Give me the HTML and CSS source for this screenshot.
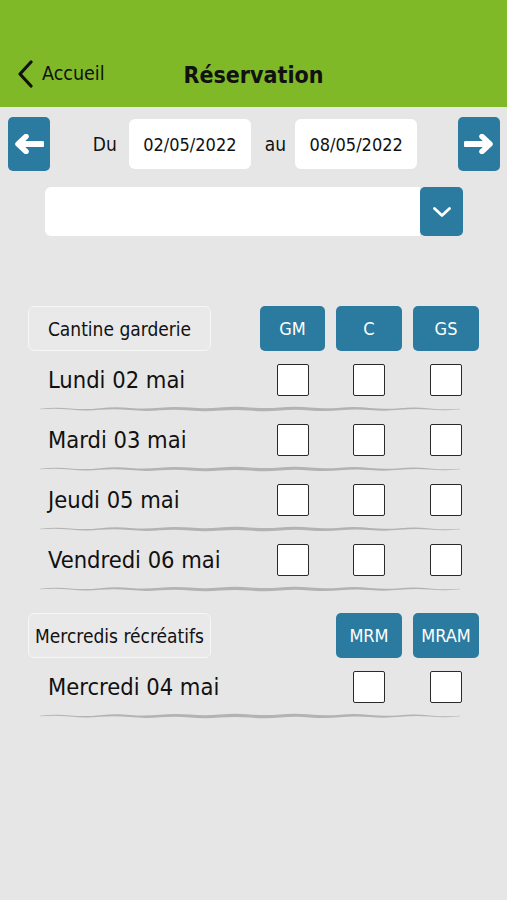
FILE: index.html
```html
<!DOCTYPE html>
<html lang="fr">
<head>
  <meta charset="UTF-8">
  <meta name="viewport" content="width=device-width, initial-scale=1.0">
  <title>Réservation</title>
  <link rel="stylesheet" href="styles.css">
</head>
<body>
  <!-- shared brush-stroke separator -->
  <svg class="defs" width="0" height="0">
    <symbol id="wave" viewBox="0 0 420 8">
      <path d="M0,3.7 Q15,2.15 30,3.41 Q45,4.67 60,3.14 Q75,1.61 90,2.89 Q105,4.18 120,2.68 Q135,1.2 150,2.53 Q165,3.87 180,2.43 Q195,1.01 210,2.4 Q225,3.81 240,2.43 Q255,1.07 270,2.53 Q285,4.0 300,2.68 Q315,1.38 330,2.89 Q345,4.41 360,3.14 Q375,1.87 390,3.41 Q405,4.95 420,3.7
               L420,4.3 Q405,5.85 390,4.59 Q375,3.33 360,4.86 Q345,6.39 330,5.11 Q315,3.82 300,5.32 Q285,6.8 270,5.47 Q255,4.13 240,5.57 Q225,6.99 210,5.6 Q195,4.19 180,5.57 Q165,6.93 150,5.47 Q135,4.0 120,5.32 Q105,6.62 90,5.11 Q75,3.59 60,4.86 Q45,6.13 30,4.59 Q15,3.05 0,4.3 Z"/>
    </symbol>
  </svg>

  <header class="topbar">
    <a class="back" href="#">
      <svg class="back-icon" viewBox="0 0 16 28" width="16" height="28">
        <path d="M14 2 L3 14 L14 26" fill="none" stroke="#111" stroke-width="3.2" stroke-linecap="round" stroke-linejoin="round"/>
      </svg>
      Accueil
    </a>
    <h1 class="title">Réservation</h1>
    <span></span>
  </header>

  <div class="period">
    <button class="nav-btn">
      <svg viewBox="0 0 30 20" width="30" height="20">
        <path d="M28 10 H6" stroke="#fff" stroke-width="6" stroke-linecap="round"/>
        <path d="M12 2.5 L4 10 L12 17.5" fill="none" stroke="#fff" stroke-width="5.5" stroke-linecap="round" stroke-linejoin="round"/>
      </svg>
    </button>
    <div class="dates">
      <span class="dates-word">Du</span>
      <div class="date-box">02/05/2022</div>
      <span class="dates-word">au</span>
      <div class="date-box">08/05/2022</div>
    </div>
    <button class="nav-btn">
      <svg viewBox="0 0 30 20" width="30" height="20">
        <path d="M2 10 H24" stroke="#fff" stroke-width="6" stroke-linecap="round"/>
        <path d="M18 2.5 L26 10 L18 17.5" fill="none" stroke="#fff" stroke-width="5.5" stroke-linecap="round" stroke-linejoin="round"/>
      </svg>
    </button>
  </div>

  <div class="picker">
    <div class="picker-field"></div>
    <button class="picker-btn">
      <svg viewBox="0 0 18 10" width="18" height="10">
        <path d="M1.5 1.5 L9 8.5 L16.5 1.5" fill="none" stroke="#fff" stroke-width="2.8" stroke-linecap="round" stroke-linejoin="round"/>
      </svg>
    </button>
  </div>

  <section class="group">
    <div class="group-head">
      <div class="group-label">Cantine garderie</div>
      <div class="tag">GM</div>
      <div class="tag">C</div>
      <div class="tag">GS</div>
    </div>

    <div class="day">
      <span class="day-name">Lundi 02 mai</span>
      <span class="check"></span><span class="check"></span><span class="check"></span>
    </div>
    <div class="wave"><svg><use href="#wave"/></svg></div>

    <div class="day">
      <span class="day-name">Mardi 03 mai</span>
      <span class="check"></span><span class="check"></span><span class="check"></span>
    </div>
    <div class="wave"><svg><use href="#wave"/></svg></div>

    <div class="day">
      <span class="day-name">Jeudi 05 mai</span>
      <span class="check"></span><span class="check"></span><span class="check"></span>
    </div>
    <div class="wave"><svg><use href="#wave"/></svg></div>

    <div class="day">
      <span class="day-name">Vendredi 06 mai</span>
      <span class="check"></span><span class="check"></span><span class="check"></span>
    </div>
    <div class="wave"><svg><use href="#wave"/></svg></div>
  </section>

  <section class="group group-second">
    <div class="group-head">
      <div class="group-label">Mercredis récréatifs</div>
      <div class="tag col-2">MRM</div>
      <div class="tag col-3">MRAM</div>
    </div>

    <div class="day">
      <span class="day-name">Mercredi 04 mai</span>
      <span class="check col-2"></span><span class="check col-3"></span>
    </div>
    <div class="wave"><svg><use href="#wave"/></svg></div>
  </section>
</body>
</html>
```

FILE: styles.css
```css
body {
  margin: 0;
  min-height: 900px;
  background-color: #e6e6e6;
  font-family: "DejaVu Sans Condensed", "DejaVu Sans", sans-serif;
  color: #111;
}

.defs {
  position: absolute;
  width: 0;
  height: 0;
}

/* Top bar */
.topbar {
  height: 67px;
  padding-top: 40px;
  background-color: #7fb927;
  display: grid;
  grid-template-columns: 1fr auto 1fr;
  align-items: center;
}

.back {
  display: flex;
  align-items: center;
  gap: 9px;
  padding-left: 17px;
  color: #111;
  text-decoration: none;
  font-size: 19.5px;
}

.back-icon {
  display: block;
}

.title {
  margin: 0;
  font-size: 23px;
  font-weight: bold;
  padding-top: 3px;
}

/* Period selector */
.period {
  display: flex;
  align-items: center;
  margin: 10px 7px 0 8px;
}

.nav-btn {
  width: 42px;
  height: 54px;
  border: none;
  border-radius: 5px;
  background-color: #2b7aa0;
  padding: 0;
  display: flex;
  align-items: center;
  justify-content: center;
}

.dates {
  flex: 1;
  display: flex;
  align-items: center;
  justify-content: center;
  padding-left: 2px;
}

.dates-word {
  font-size: 19px;
}

.dates-word:first-child {
  margin-right: 12px;
}

.date-box {
  width: 122px;
  height: 50px;
  background-color: #fff;
  border-radius: 6px;
  display: flex;
  align-items: center;
  justify-content: center;
  font-size: 18px;
}

.date-box + .dates-word {
  margin: 0 9px 0 14px;
}

.picker {
  display: flex;
  margin: 16px 44px 0 45px;
  height: 49px;
}

.picker-field {
  flex: 1;
  background-color: #fff;
  border-radius: 6px 0 0 6px;
}

.picker-btn {
  width: 43px;
  border: none;
  border-radius: 5px;
  background-color: #2b7aa0;
  padding: 0;
  display: flex;
  align-items: center;
  justify-content: center;
}

/* Groups */
.group {
  margin: 70px 28px 0 28px;
}

.group-second {
  margin-top: 10px;
}

.group-head,
.day {
  display: grid;
  grid-template-columns: 1fr 65px 66px 66px;
  column-gap: 11px;
}

.group-head {
  height: 45px;
}

.group-label {
  width: 181px;
  border: 1px solid #f6f6f6;
  border-radius: 6px;
  background-color: #e9e9e9;
  display: flex;
  align-items: center;
  justify-content: center;
  font-size: 19px;
  white-space: nowrap;
}

.tag {
  background-color: #2b7aa0;
  border-radius: 5px;
  color: #fff;
  font-size: 18px;
  display: flex;
  align-items: center;
  justify-content: center;
}

.col-2 { grid-column: 3; }
.col-3 { grid-column: 4; }

.day {
  height: 33px;
  align-items: center;
}

.group-head + .day {
  margin-top: 12px;
}

.day-name {
  grid-column: 1;
  padding-left: 20px;
  font-size: 23.5px;
  white-space: nowrap;
}

.check {
  justify-self: center;
  width: 30px;
  height: 30px;
  background-color: #fff;
  border: 1.5px solid #2a2a2a;
  border-radius: 2px;
}

.wave {
  height: 18px;
  padding: 9px 0 0 12px;
}

.wave svg {
  display: block;
  width: 420px;
  height: 8px;
  fill: #b3b3b3;
}
```
